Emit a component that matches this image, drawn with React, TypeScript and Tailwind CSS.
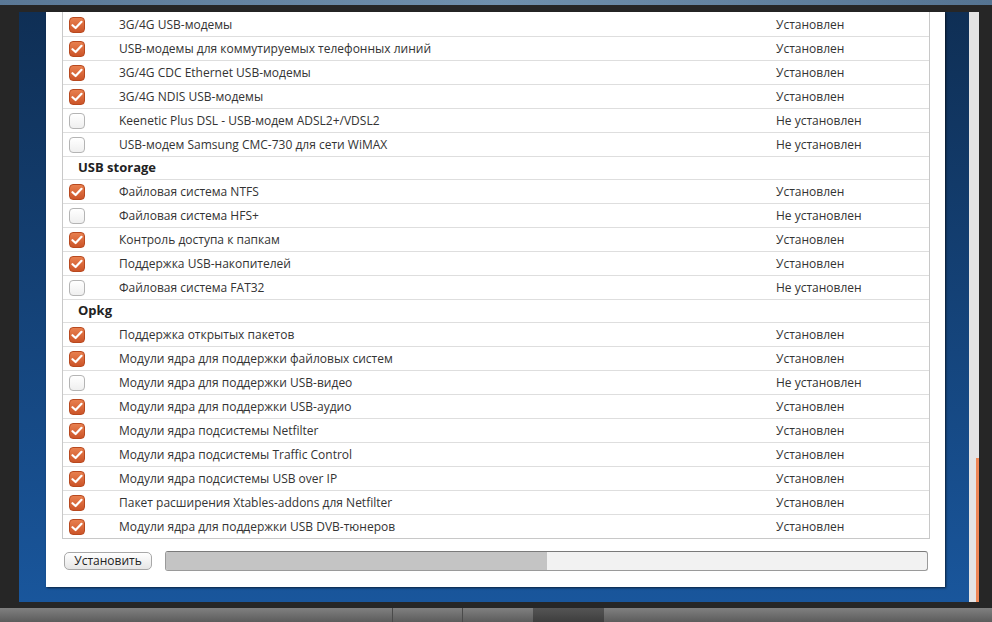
import * as React from "react";

type Row = { kind: "item"; label: string; on: boolean } | { kind: "header"; label: string };

const rows: Row[] = [
  { kind: "item", label: "3G/4G USB-модемы", on: true },
  { kind: "item", label: "USB-модемы для коммутируемых телефонных линий", on: true },
  { kind: "item", label: "3G/4G CDC Ethernet USB-модемы", on: true },
  { kind: "item", label: "3G/4G NDIS USB-модемы", on: true },
  { kind: "item", label: "Keenetic Plus DSL - USB-модем ADSL2+/VDSL2", on: false },
  { kind: "item", label: "USB-модем Samsung CMC-730 для сети WiMAX", on: false },
  { kind: "header", label: "USB storage" },
  { kind: "item", label: "Файловая система NTFS", on: true },
  { kind: "item", label: "Файловая система HFS+", on: false },
  { kind: "item", label: "Контроль доступа к папкам", on: true },
  { kind: "item", label: "Поддержка USB-накопителей", on: true },
  { kind: "item", label: "Файловая система FAT32", on: false },
  { kind: "header", label: "Opkg" },
  { kind: "item", label: "Поддержка открытых пакетов", on: true },
  { kind: "item", label: "Модули ядра для поддержки файловых систем", on: true },
  { kind: "item", label: "Модули ядра для поддержки USB-видео", on: false },
  { kind: "item", label: "Модули ядра для поддержки USB-аудио", on: true },
  { kind: "item", label: "Модули ядра подсистемы Netfilter", on: true },
  { kind: "item", label: "Модули ядра подсистемы Traffic Control", on: true },
  { kind: "item", label: "Модули ядра подсистемы USB over IP", on: true },
  { kind: "item", label: "Пакет расширения Xtables-addons для Netfilter", on: true },
  { kind: "item", label: "Модули ядра для поддержки USB DVB-тюнеров", on: true },
];

const Check = ({ on }: { on: boolean }) =>
  on ? (
    <div className="w-[16px] h-[16px] rounded-[4px] border border-[#b8491f] bg-gradient-to-b from-[#e8804f] to-[#cc5428] flex items-center justify-center">
      <svg width="12" height="10" viewBox="0 0 12 10">
        <path d="M1.5 5.2 L4.6 8 L10.5 1.8" fill="none" stroke="#fff" strokeWidth="2.2" strokeLinecap="round" strokeLinejoin="round" />
      </svg>
    </div>
  ) : (
    <div className="w-[16px] h-[16px] rounded-[4px] border border-[#b4b4b4] bg-gradient-to-b from-[#ffffff] to-[#efefef]" />
  );

export default function App() {
  return (
    <div
      className="w-[992px] h-[622px] bg-[#262626] flex flex-col overflow-hidden text-[#333] text-[12px]"
      style={{ fontFamily: '"Open Sans", "Noto Sans", sans-serif' }}
    >
      {/* wallpaper strip */}
      <div className="h-[5px] bg-gradient-to-r from-[#5a7896] via-[#7090ad] to-[#557492]" />
      <div className="h-[7px]" />

      <div className="h-[590px] flex">
        <div className="w-[19px]" />
        {/* blue frame */}
        <div className="w-[950px] bg-gradient-to-b from-[#0f2f55] to-[#19569c] flex pl-[27px] pr-[24px] pb-[15px]">
          <div className="flex-1 bg-white overflow-hidden flex flex-col pl-[16px] pr-[15px] shadow-[1px_1px_2px_rgba(0,0,0,0.6)]">
            <div className="border-x border-b border-[#c8c8c8]">
              {rows.map((r, i) => {
                const h = i === 0 ? "h-[24px] border-t-transparent" : r.kind === "header" ? "h-[23px]" : "h-[24px]";
                if (r.kind === "header")
                  return (
                    <div key={i} className={`${h} border-t border-[#dedede] flex items-center pl-[15px] font-bold text-[13px] text-[#222]`}>
                      {r.label}
                    </div>
                  );
                return (
                  <div key={i} className={`border-t border-[#dedede] ${h} flex items-center`}>
                    <div className="w-[56px] pl-[6px] flex items-center">
                      <Check on={r.on} />
                    </div>
                    <div className="w-[657px] truncate">{r.label}</div>
                    <div>{r.on ? "Установлен" : "Не установлен"}</div>
                  </div>
                );
              })}
            </div>

            {/* bottom controls */}
            <div className="mt-[12px] h-[20px] flex items-center">
              <button className="ml-[2px] h-[18px] w-[88px] rounded-[5px] border border-[#a8a8a8] bg-gradient-to-b from-[#ffffff] to-[#e6e6e6] text-[12px] text-[#222] leading-none flex items-center justify-center">
                Установить
              </button>
              <div className="ml-[13px] w-[763px] h-[20px] rounded-[3px] border border-[#9a9a9a] border-t-[#7a7a7a] bg-[#f2f2f2] overflow-hidden flex">
                <div className="w-[381px] h-full bg-[#c4c4c4]" />
              </div>
            </div>
          </div>
        </div>
        {/* scrollbar strip */}
        <div className="w-[10px] bg-[#e4e4e4] flex flex-col items-end">
          <div className="h-[446px]" />
          <div className="w-[3px] flex-1 bg-[#ee8655]" />
        </div>
        <div className="flex-1" />
      </div>

      <div className="h-[6px]" />
      {/* taskbar */}
      <div className="flex-1 flex bg-gradient-to-b from-[#808080] to-[#5c5c5c]">
        <div className="w-[393px] border-r border-[#4a4a4a]" />
        <div className="w-[70px] border-r border-[#4a4a4a]" />
        <div className="w-[70px]" />
        <div className="w-[71px] bg-gradient-to-b from-[#555] to-[#3e3e3e]" />
        <div className="flex-1" />
      </div>
    </div>
  );
}
